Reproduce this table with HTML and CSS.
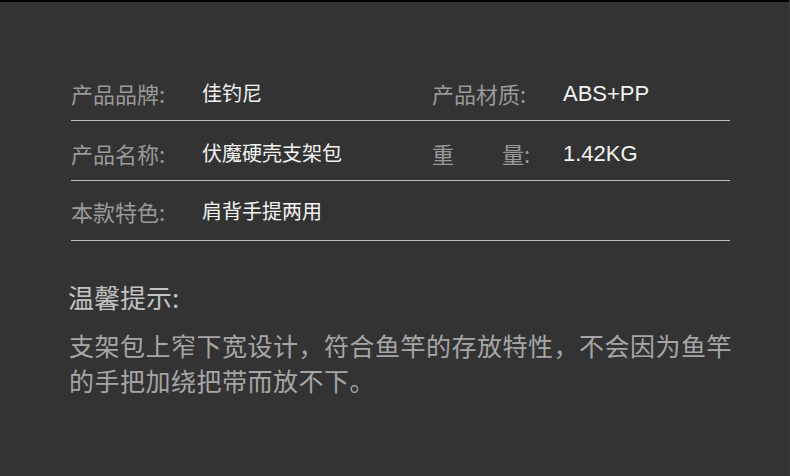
FILE: index.html
```html
<!DOCTYPE html>
<html lang="zh-CN">
<head>
<meta charset="utf-8">
<title>产品参数</title>
<link rel="stylesheet" href="styles.css">
</head>
<body>
<div class="topbar"></div>
<main class="page">
  <section class="specs">
    <div class="row">
      <div class="label">产品品牌:</div>
      <div class="value">佳钓尼</div>
      <div class="label">产品材质:</div>
      <div class="value"><span class="latin">ABS+PP</span></div>
    </div>
    <div class="row">
      <div class="label">产品名称:</div>
      <div class="value">伏魔硬壳支架包</div>
      <div class="label"><span>重</span><span class="gap">量</span>:</div>
      <div class="value"><span class="latin">1.42KG</span></div>
    </div>
    <div class="row row-last">
      <div class="label">本款特色:</div>
      <div class="value">肩背手提两用</div>
      <div class="label"></div>
      <div class="value"></div>
    </div>
  </section>
  <section class="tips">
    <h2 class="tips-title">温馨提示:</h2>
    <p class="tips-text">支架包上窄下宽设计，符合鱼竿的存放特性，不会因为鱼竿的手把加绕把带而放不下。</p>
  </section>
</main>
</body>
</html>
```
FILE: styles.css
```css
* { box-sizing: border-box; }
html, body {
  margin: 0;
  padding: 0;
  background: #333333;
}
body {
  width: 790px;
  height: 476px;
  overflow: hidden;
  font-family: "Noto Sans CJK SC", "Noto Sans", sans-serif;
  border-right: 1px solid #3a3a3a;
}
.topbar {
  height: 2px;
  background: #000;
}
.page {
  padding-left: 71px;
}
.specs {
  margin-top: 59px;
  width: 659px;
}
.row {
  display: grid;
  grid-template-columns: 131px 230px 131px 1fr;
  align-items: center;
  height: 60px;
  padding-top: 4px;
  border-bottom: 1px solid #bdbdbd;
}
.row-last {
  padding-top: 1px;
}
.label {
  font-size: 22px;
  color: #9a9a9a;
  line-height: 30px;
  height: 30px;
  white-space: nowrap;
}
.gap {
  margin-left: 48px;
}
.value {
  font-family: "Noto Sans CJK SC", sans-serif;
  font-size: 20px;
  color: #f2f2f2;
  line-height: 30px;
  height: 30px;
  white-space: nowrap;
}
.latin {
  font-family: "Liberation Sans", sans-serif;
  font-size: 22px;
}
.tips {
  margin-top: 38px;
  width: 670px;
}
.tips-title {
  margin: 0;
  font-size: 26px;
  font-weight: normal;
  line-height: 36px;
  color: #c2c2c2;
  margin-left: -3px;
}
.tips-text {
  margin: 13px 0 0 -2px;
  font-size: 25px;
  letter-spacing: 0.5px;
  line-height: 35px;
  color: #a6a6a6;
}
```
